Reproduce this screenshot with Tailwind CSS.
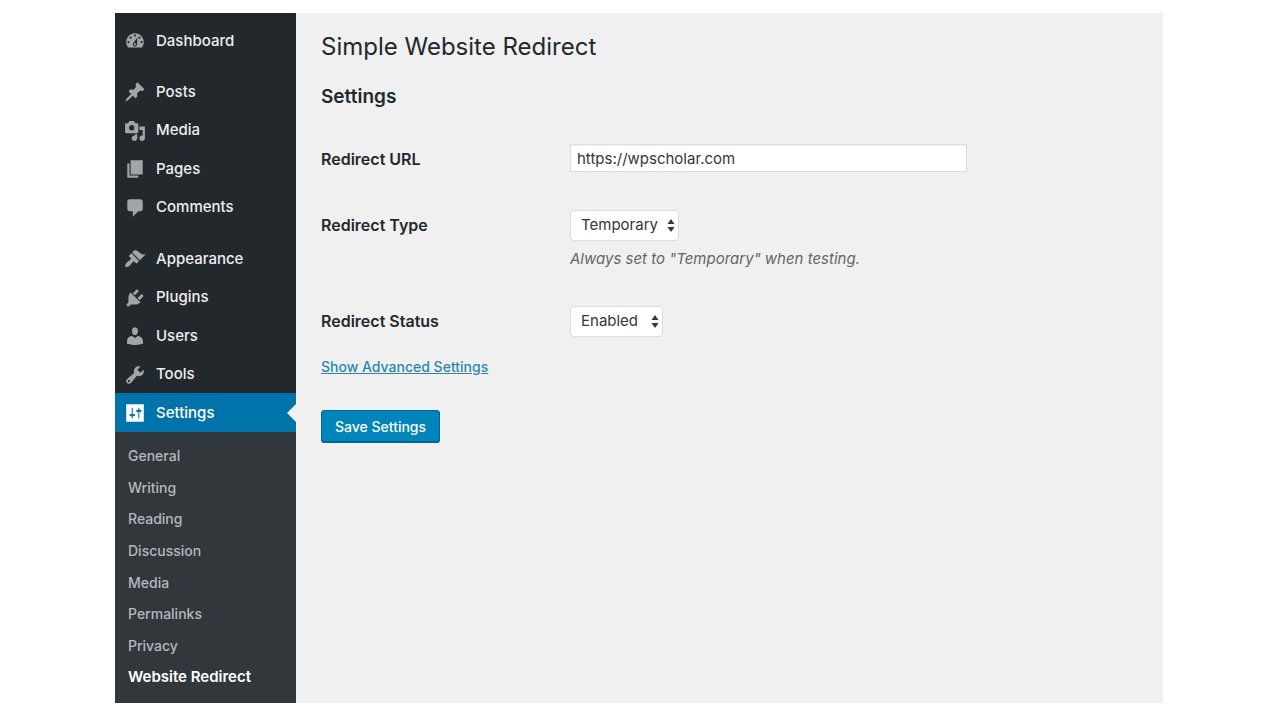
<!DOCTYPE html>
<html lang="en">
<head>
<meta charset="utf-8">
<meta name="viewport" content="width=device-width, initial-scale=1">
<title>Simple Website Redirect</title>
<script src="https://cdn.jsdelivr.net/npm/@tailwindcss/browser@4"></script>
</head>
<body class="bg-white font-['Inter','Liberation_Sans',sans-serif]">
<div class="flex min-h-screen pt-[13px] pr-[117px] pb-[17px] pl-[115px]">
  <nav aria-label="Admin menu" class="flex w-[181px] shrink-0 flex-col bg-[#23282d] pt-2 text-[15px] font-medium text-[#eeeeee]">
    <ul class="[&_svg]:size-[22px] [&_svg]:fill-[#a0a5aa] [&_a]:flex [&_a]:h-full [&_a]:items-center [&_a]:gap-[10px] [&_a]:pt-px [&_a]:pl-[9px] [&>li]:h-[39px]">
      <li><a href="#"><svg viewBox="0 0 20 20" aria-hidden="true"><path d="M3.76 16h12.48c1.1-1.37 1.76-3.11 1.76-5 0-4.42-3.58-8-8-8s-8 3.58-8 8c0 1.89.66 3.63 1.76 5zM10 4c.55 0 1 .45 1 1s-.45 1-1 1-1-.45-1-1 .45-1 1-1zM6 6c.55 0 1 .45 1 1s-.45 1-1 1-1-.45-1-1 .45-1 1-1zm8 0c.55 0 1 .45 1 1s-.45 1-1 1-1-.45-1-1 .45-1 1-1zm-5.37 5.55L12 7v6c0 1.1-.9 2-2 2s-2-.9-2-2c0-.57.24-1.08.63-1.45zM4 10c.55 0 1 .45 1 1s-.45 1-1 1-1-.45-1-1 .45-1 1-1zm12 0c.55 0 1 .45 1 1s-.45 1-1 1-1-.45-1-1 .45-1 1-1zm-5 3c0-.55-.45-1-1-1s-1 .45-1 1 .45 1 1 1 1-.45 1-1z"/></svg>Dashboard</a></li>
    </ul>
    <ul class="mt-3 [&_svg]:size-[22px] [&_svg]:fill-[#a0a5aa] [&_a]:flex [&_a]:h-full [&_a]:items-center [&_a]:gap-[10px] [&_a]:pt-px [&_a]:pl-[9px] [&>li]:odd:h-[39px] [&>li]:even:h-[38px]">
      <li><a href="#"><svg viewBox="0 0 20 20" aria-hidden="true"><path d="M10.44 3.02l1.82-1.82 6.36 6.35-1.83 1.82c-1.05-.68-2.48-.57-3.41.36l-.75.75c-.92.93-1.04 2.35-.35 3.41l-1.83 1.82-2.41-2.41-2.8 2.79c-.42.42-3.38 2.71-3.8 2.29s1.86-3.39 2.28-3.81l2.79-2.79L4.1 9.36l1.83-1.82c1.05.69 2.48.57 3.4-.36l.75-.75c.93-.92 1.05-2.35.36-3.41z"/></svg>Posts</a></li>
      <li><a href="#"><svg viewBox="0 0 20 20" aria-hidden="true"><path d="M13 11V4c0-.55-.45-1-1-1h-1.67L9 1H5L3.67 3H2c-.55 0-1 .45-1 1v7c0 .55.45 1 1 1h10c.55 0 1-.45 1-1zM7 4.5c1.38 0 2.5 1.12 2.5 2.5S8.38 9.5 7 9.5 4.5 8.38 4.5 7 5.62 4.5 7 4.5zM14 6h5v10.5c0 1.38-1.12 2.5-2.5 2.5S14 17.88 14 16.5s1.12-2.5 2.5-2.5c.17 0 .34.02.5.05V9h-3V6zm-4 8.05V13h2v3.5c0 1.38-1.12 2.5-2.5 2.5S7 17.88 7 16.5 8.12 14 9.5 14c.17 0 .34.02.5.05z"/></svg>Media</a></li>
      <li><a href="#"><svg viewBox="0 0 20 20" aria-hidden="true"><path d="M6 15V2h11v13H6zm-1 1h8v2H3V5h2v11z"/></svg>Pages</a></li>
      <li><a href="#"><svg viewBox="0 0 20 20" aria-hidden="true"><path d="M5 2h10c1.1 0 2 .9 2 2v7c0 1.1-.9 2-2 2h-2l-5 5v-5H5c-1.1 0-2-.9-2-2V4c0-1.1.9-2 2-2z"/></svg>Comments</a></li>
    </ul>
    <ul class="mt-[13px] [&_svg]:size-[22px] [&_svg]:fill-[#a0a5aa] [&_a]:flex [&_a]:h-full [&_a]:items-center [&_a]:gap-[10px] [&_a]:pt-px [&_a]:pl-[9px] [&>li]:odd:h-[39px] [&>li]:even:h-[38px]">
      <li><a href="#"><svg viewBox="0 0 20 20" aria-hidden="true"><path d="M14.48 11.06L7.41 3.99l1.5-1.5c.5-.56 2.3-.47 3.51.32 1.21.8 1.43 1.28 2.91 2.1 1.18.64 2.45 1.26 4.45.85zm-.71.71L6.7 4.7 4.93 6.47c-.39.39-.39 1.02 0 1.41l1.06 1.06c.39.39.39 1.03 0 1.42-.6.6-1.43 1.11-2.21 1.69-.35.26-.7.53-1.01.84C1.43 14.23.4 16.08 1.4 17.07c.99 1 2.84-.03 4.18-1.36.31-.31.58-.66.85-1.02.57-.78 1.08-1.61 1.69-2.21.39-.39 1.02-.39 1.41 0l1.06 1.06c.39.39 1.02.39 1.41 0z"/></svg>Appearance</a></li>
      <li><a href="#"><svg viewBox="0 0 20 20" aria-hidden="true"><path d="M13.11 4.36L9.87 7.6 8 5.73l3.24-3.24c.35-.34 1.05-.2 1.56.32.52.51.66 1.21.31 1.55zm-8 1.77l.91-1.12 9.01 9.01-1.19.84c-.71.71-2.63 1.16-3.82 1.16H6.14L4.9 17.26c-.59.59-1.54.59-2.12 0-.59-.58-.59-1.53 0-2.12l1.24-1.24v-3.88c0-1.13.4-3.19 1.09-3.89zm7.26 3.97l3.24-3.24c.34-.35 1.04-.21 1.55.31.52.51.66 1.21.31 1.55l-3.24 3.25z"/></svg>Plugins</a></li>
      <li><a href="#"><svg viewBox="0 0 20 20" aria-hidden="true"><path d="M10 9.25c-2.27 0-2.73-3.44-2.73-3.44C7 4.02 7.82 2 9.97 2c2.16 0 2.98 2.02 2.71 3.81 0 0-.41 3.44-2.68 3.44zm0 2.57L12.72 10c2.39 0 4.52 2.33 4.52 4.53v2.49s-3.65 1.13-7.24 1.13c-3.65 0-7.24-1.13-7.24-1.13v-2.49c0-2.25 1.94-4.48 4.47-4.48z"/></svg>Users</a></li>
      <li><a href="#"><svg viewBox="0 0 20 20" aria-hidden="true"><path d="M16.68 9.77c-1.34 1.34-3.3 1.67-4.95.99l-5.41 6.52c-.99.99-2.59.99-3.58 0s-.99-2.59 0-3.57l6.52-5.42c-.68-1.65-.35-3.61.99-4.95 1.28-1.28 3.12-1.62 4.72-1.06l-2.89 2.89 2.82 2.82 2.86-2.87c.53 1.58.18 3.39-1.08 4.65zM3.81 16.21c.4.39 1.04.39 1.43 0 .4-.4.4-1.04 0-1.43-.39-.4-1.03-.4-1.43 0-.39.39-.39 1.03 0 1.43z"/></svg>Tools</a></li>
      <li class="relative bg-[#0073aa] text-white"><a href="#" aria-current="true"><svg class="!fill-white" viewBox="0 0 20 20" aria-hidden="true"><path d="M18 18V2H2v16h16zM8 11h1c.55 0 1 .45 1 1s-.45 1-1 1H8v1.5c0 .28-.22.5-.5.5s-.5-.22-.5-.5V13H6c-.55 0-1-.45-1-1s.45-1 1-1h1V5.5c0-.28.22-.5.5-.5s.5.22.5.5V11zm5-2h-1c-.55 0-1-.45-1-1s.45-1 1-1h1V5.5c0-.28.22-.5.5-.5s.5.22.5.5V7h1c.55 0 1 .45 1 1s-.45 1-1 1h-1v5.5c0 .28-.22.5-.5.5s-.5-.22-.5-.5V9z" fill-rule="evenodd"/></svg>Settings</a>
        <span class="absolute top-1/2 right-0 -translate-y-1/2 border-y-[9px] border-r-[9px] border-y-transparent border-r-[#f0f0f0]"></span></li>
    </ul>
    <ul class="flex-1 bg-[#32373c] pt-[7px] pb-[10px] pl-[13px] text-[14px] text-[#b4b9be] [&_a]:flex [&_a]:h-full [&_a]:items-center [&>li]:h-8 [&>li:nth-child(3n)]:h-[31px]">
      <li><a href="#">General</a></li>
      <li><a href="#">Writing</a></li>
      <li><a href="#">Reading</a></li>
      <li><a href="#">Discussion</a></li>
      <li><a href="#">Media</a></li>
      <li><a href="#">Permalinks</a></li>
      <li><a href="#">Privacy</a></li>
      <li class="text-[15px] font-semibold text-white"><a href="#" aria-current="page">Website Redirect</a></li>
    </ul>
  </nav>
  <main class="min-w-0 flex-1 bg-[#f0f0f0] px-[25px] pt-[18px] text-[15px] text-[#444444]">
    <h1 class="text-[24px] leading-8 text-[#23282d]">Simple Website Redirect</h1>
    <h2 class="mt-[22px] text-[19px] leading-6 font-semibold text-[#23282d]">Settings</h2>
    <form>
      <div class="mt-[35px] grid grid-cols-[249px_1fr]">
        <label for="url" class="text-[16px] leading-[30px] font-semibold text-[#23282d]">Redirect URL</label>
        <input id="url" type="text" value="https://wpscholar.com" class="h-7 w-full max-w-[397px] border border-[#dddddd] bg-white px-[6px] text-[#32373c] shadow-[inset_0_1px_2px_rgba(0,0,0,0.07)]">
      </div>
      <div class="mt-9 grid grid-cols-[249px_1fr]">
        <label for="type" class="text-[16px] leading-[30px] font-semibold text-[#23282d]">Redirect Type</label>
        <div>
          <div class="relative w-fit">
            <select id="type" class="block h-[31px] w-[109px] appearance-none rounded-[4px] border border-[#dddddd] bg-white pl-[10px] text-[#32373c]"><option>Temporary</option><option>Permanent</option></select>
            <svg class="pointer-events-none absolute top-2 right-1 h-[15px] w-2 fill-[#32373c]" viewBox="0 0 8 15" aria-hidden="true"><path d="M4 1l3.5 5h-7zM4 14L.5 9h7z"/></svg>
          </div>
          <p class="mt-2 leading-5 text-[#666666] italic">Always set to "Temporary" when testing.</p>
        </div>
      </div>
      <div class="mt-[37px] grid grid-cols-[249px_1fr]">
        <label for="status" class="text-[16px] leading-[30px] font-semibold text-[#23282d]">Redirect Status</label>
        <div class="relative w-fit">
          <select id="status" class="block h-[31px] w-[93px] appearance-none rounded-[4px] border border-[#dddddd] bg-white pl-[10px] text-[#32373c]"><option>Enabled</option><option>Disabled</option></select>
          <svg class="pointer-events-none absolute top-2 right-1 h-[15px] w-2 fill-[#32373c]" viewBox="0 0 8 15" aria-hidden="true"><path d="M4 1l3.5 5h-7zM4 14L.5 9h7z"/></svg>
        </div>
      </div>
      <a href="#" class="mt-5 block w-fit text-[14px] leading-5 font-medium text-[#2c88ab] underline">Show Advanced Settings</a>
      <button type="submit" class="mt-[33px] block h-8 rounded-[3px] border border-[#006799] bg-[#0085ba] px-[13px] text-[14px] font-medium text-white shadow-[0_1px_0_#006799]">Save Settings</button>
    </form>
  </main>
</div>
</body>
</html>
